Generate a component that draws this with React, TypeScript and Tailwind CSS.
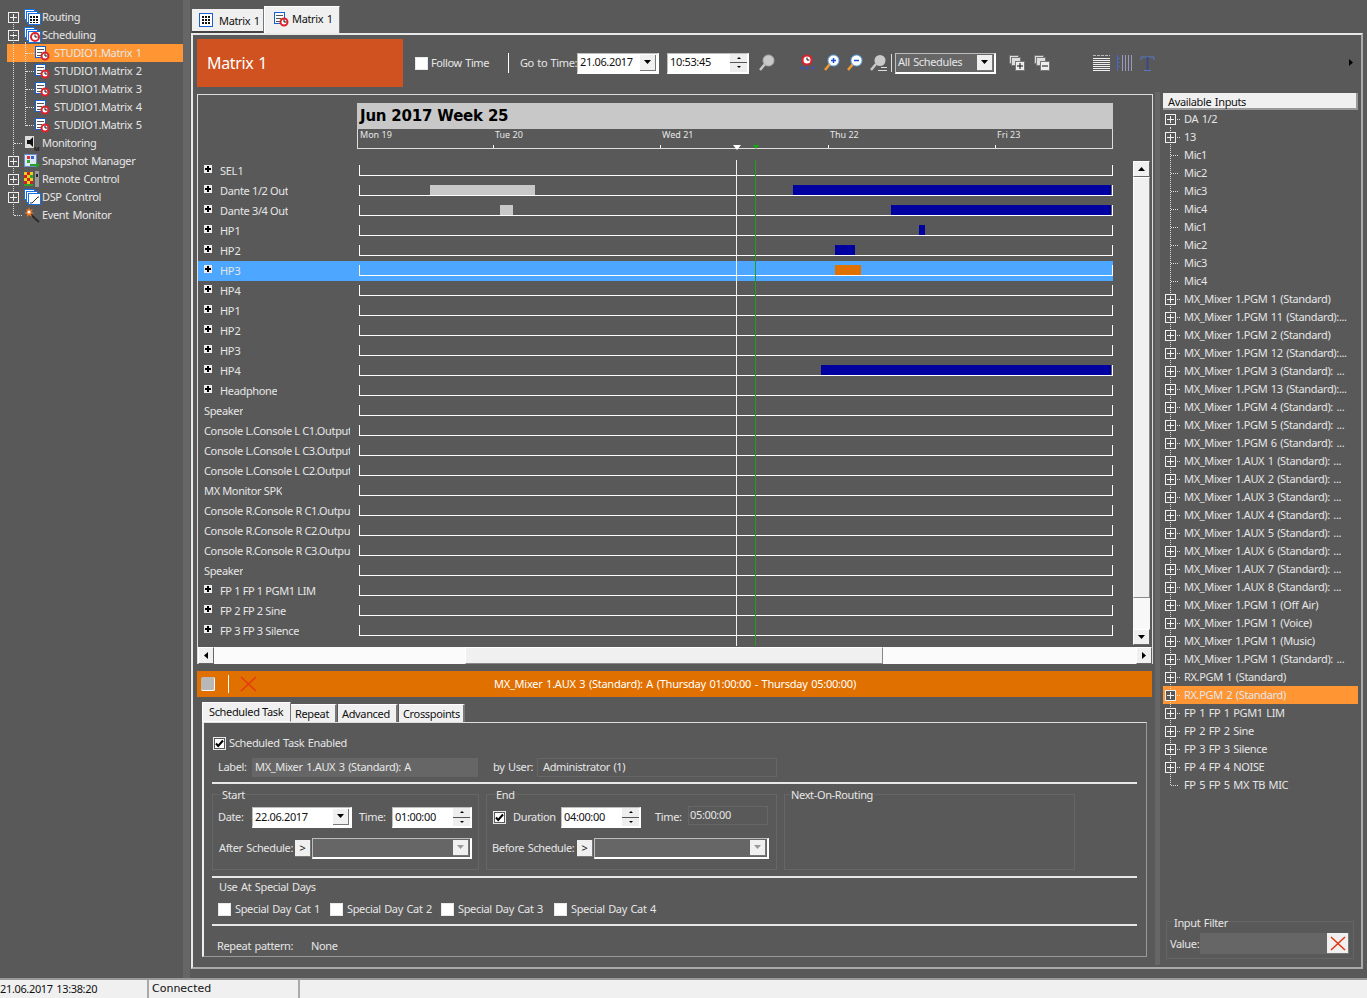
import React from "react";

const FONT = "[font-family:'Noto_Sans','Open_Sans',sans-serif]";

function Plus({ minus = false }: { minus?: boolean }) {
  return (
    <svg width="11" height="11" viewBox="0 0 11 11" className="shrink-0 relative">
      <rect x="0.5" y="0.5" width="10" height="10" fill="#595959" stroke="#f0f0f0" />
      <path d={minus ? "M2 5.5h7" : "M2 5.5h7M5.5 2v7"} stroke="#f0f0f0" fill="none" />
    </svg>
  );
}

function Clock({ x, y, r = 5 }: { x: number; y: number; r?: number }) {
  return (
    <g>
      <circle cx={x} cy={y} r={r} fill="#fff" stroke="#e0202a" strokeWidth="2" />
      <path d={`M${x} ${y - 2.5}V${y}H${x + 2.5}`} stroke="#111" fill="none" />
    </g>
  );
}

function DocClock() {
  return (
    <svg width="16" height="16" viewBox="0 0 16 16" className="shrink-0">
      <rect x="0.5" y="1.5" width="10" height="11" fill="#fff" stroke="#1a5fd0" />
      <path d="M2 4.5h7M2 7.5h5M2 10.5h4" stroke="#555" />
      <Clock x={10} y={11} r={3.5} />
    </svg>
  );
}

function Stack({ kind }: { kind: "grid" | "clock" | "curve" }) {
  return (
    <svg width="17" height="16" viewBox="0 0 17 16" className="shrink-0">
      <rect x="0.5" y="0.5" width="10" height="10" fill="#fff" stroke="#1a6fe0" />
      <rect x="2.5" y="2.5" width="11" height="11" fill="#fff" stroke="#1a6fe0" />
      <rect x="4.5" y="4.5" width="12" height="11" fill="#fff" stroke="#1a6fe0" />
      {kind === "grid" && (
        <path d="M6 7h2v2H6zM9 7h2v2H9zM12 7h2v2h-2zM6 10h2v2H6zM9 10h2v2H9zM12 10h2v2h-2zM6 13h2v1H6zM9 13h2v1H9zM12 13h2v1h-2z" fill="#111" />
      )}
      {kind === "clock" && <Clock x={11} y={10} r={4} />}
      {kind === "curve" && <path d="M6 14h2l6-6h1" stroke="#333" fill="none" />}
    </svg>
  );
}

function TreeIcon({ name }: { name: string }) {
  if (name === "monitor")
    return (
      <svg width="16" height="16" viewBox="0 0 16 16" className="shrink-0">
        <rect x="1" y="1" width="9" height="12" fill="#ddd" />
        <path d="M3 5h3l3-3v10l-3-3H3z" fill="#111" />
        <text x="10" y="16" fontSize="6" fill="#000">M</text>
      </svg>
    );
  if (name === "snapshot")
    return (
      <svg width="16" height="16" viewBox="0 0 16 16" className="shrink-0">
        <rect x="0.5" y="1.5" width="12" height="12" fill="#dfe7f5" stroke="#6a8fc8" />
        <path d="M3 3h3v3H3z" fill="#d33" />
        <path d="M7 3h3v3H7z" fill="#36c" />
        <path d="M3 7h3v3H3z" fill="#3a3" />
        <path d="M6 11h6V9l4 3-4 3v-2H6z" fill="#2aa02a" />
      </svg>
    );
  if (name === "remote")
    return (
      <svg width="16" height="16" viewBox="0 0 16 16" className="shrink-0">
        <path d="M0 1h3v3H0zM6 1h3v3H6zM3 4h3v3H3zM0 7h3v3H0zM6 7h3v3H6zM3 10h3v3H3z" fill="#e8d020" />
        <path d="M3 1h3v3H3zM0 4h3v3H0zM3 7h3v3H3zM0 10h3v3H0zM6 10h3v3H6z" fill="#d02020" />
        <path d="M6 4h3v3H6zM0 13h9v2H0z" fill="#30a030" />
        <rect x="11" y="0" width="4" height="16" fill="#999" />
        <rect x="12" y="3" width="2" height="3" fill="#222" />
      </svg>
    );
  if (name === "event")
    return (
      <svg width="16" height="16" viewBox="0 0 16 16" className="shrink-0">
        <path d="M6 7l9 8" stroke="#2a2a2a" strokeWidth="2" />
        <path d="M5 0l1 3 3-1-2 3 3 1-3 1 1 3-3-2-2 2 0-3-3-1 3-1-1-3 2 1z" fill="#f07820" />
        <circle cx="5" cy="5" r="1.5" fill="#fff" />
      </svg>
    );
  if (name === "doc") return <DocClock />;
  return <Stack kind={name as "grid" | "clock" | "curve"} />;
}

const leftTree = [
  { t: "Routing", icon: "grid", exp: "plus" },
  { t: "Scheduling", icon: "clock", exp: "minus" },
  { t: "STUDIO1.Matrix 1", icon: "doc", sub: true, sel: true },
  { t: "STUDIO1.Matrix 2", icon: "doc", sub: true },
  { t: "STUDIO1.Matrix 3", icon: "doc", sub: true },
  { t: "STUDIO1.Matrix 4", icon: "doc", sub: true },
  { t: "STUDIO1.Matrix 5", icon: "doc", sub: true },
  { t: "Monitoring", icon: "monitor" },
  { t: "Snapshot Manager", icon: "snapshot", exp: "plus" },
  { t: "Remote Control", icon: "remote", exp: "plus" },
  { t: "DSP Control", icon: "curve", exp: "plus" },
  { t: "Event Monitor", icon: "event" },
];

function LeftTree() {
  return (
    <div className="w-[183px] shrink-0 pt-2 relative">
      {leftTree.map((r) =>
        r.sub ? (
          <div key={r.t} className={`h-[18px] ml-[7px] pl-[19px] flex items-center ${r.sel ? "bg-[#ff9533]" : ""}`}>
            <span className="w-[8px] mr-[1px] border-b border-dotted border-[#ddd]" />
            <DocClock />
            <span className="ml-[3px] pb-[2px] whitespace-nowrap">{r.t}</span>
          </div>
        ) : (
          <div key={r.t} className="h-[18px] flex items-center pl-2">
            <span className="w-[15px] shrink-0 flex">
              {r.exp ? <Plus minus={r.exp === "minus"} /> : <span className="ml-[6px] w-[8px] border-b border-dotted border-[#ddd]" />}
            </span>
            <span className="ml-[1px] w-[18px] shrink-0 flex"><TreeIcon name={r.icon} /></span>
            <span className="pb-[2px] whitespace-nowrap">{r.t}</span>
          </div>
        )
      )}
      <span className="absolute left-[13px] top-[24px] h-[191px] border-l border-dotted border-[#ddd]" />
      <span className="absolute left-[25px] top-[42px] h-[84px] border-l border-dotted border-[#ddd]" />
    </div>
  );
}

function Tabs() {
  return (
    <div className="h-[33px] flex items-end pl-[1px] shrink-0">
      <div className="h-[24px] w-[72px] bg-[#f0f0f0] text-[#111] flex items-center gap-[6px] pl-[7px] border-r border-[#777] border-b-2 border-b-[#444]">
        <svg width="14" height="14" viewBox="0 0 14 14"><rect x="0.5" y="0.5" width="13" height="13" fill="#fff" stroke="#1a5fd0" /><path d="M3 3h2v2H3zM6 3h2v2H6zM9 3h2v2H9zM3 6h2v2H3zM6 6h2v2H6zM9 6h2v2H9zM3 9h2v2H3zM6 9h2v2H6zM9 9h2v2H9z" fill="#111" /></svg>
        <span>Matrix 1</span>
      </div>
      <div className="h-[27px] w-[76px] bg-[#f0f0f0] text-[#111] flex items-center gap-[2px] pl-[9px] pb-[2px] border border-white border-r-[#777] border-b-0">
        <DocClock />
        <span className="pb-[2px]">Matrix 1</span>
      </div>
    </div>
  );
}

function Check({ checked = false, size = 13 }: { checked?: boolean; size?: number }) {
  return (
    <svg width={size} height={size} viewBox="0 0 13 13" className="shrink-0">
      <rect x="0.5" y="0.5" width="12" height="12" fill={checked ? "#595959" : "#fff"} stroke="#e8e8e8" />
      <rect x="2" y="2" width="9" height="9" fill="#fff" />
      {checked && <path d="M3 6.5l2.2 2.5L10 3.5" stroke="#000" strokeWidth="2" fill="none" />}
    </svg>
  );
}

function Arrow({ dir = "down", color = "#000" }: { dir?: string; color?: string }) {
  const d = dir === "down" ? "M1 2h7L4.5 6z" : dir === "up" ? "M1 6h7L4.5 2z" : dir === "left" ? "M6 1v7L2 4.5z" : "M2 1v7l4-3.5z";
  return (
    <svg width="9" height="9" viewBox="0 0 9 9"><path d={d} fill={color} /></svg>
  );
}

function Combo({ w, value, dark = false, disabled = false }: { w: string; value?: string; dark?: boolean; disabled?: boolean }) {
  return (
    <div className={`${w} h-[21px] flex items-center border border-[#bdbdbd] border-r-white border-b-white border-b-2 border-r-2 ${dark ? "bg-[#666]" : "bg-white text-[#111]"}`}>
      <span className="flex-1 pl-[2px] pb-[2px] whitespace-nowrap overflow-hidden">{value}</span>
      <span className="w-[16px] h-[16px] mr-[1px] bg-[#f0f0f0] border-r border-b border-[#777] flex items-center justify-center">
        <Arrow color={disabled ? "#999" : "#000"} />
      </span>
    </div>
  );
}

function Spin({ w, value }: { w: string; value: string }) {
  return (
    <div className={`${w} h-[21px] flex items-center bg-white text-[#111] border border-[#bdbdbd] border-r-2 border-b-2 border-r-white border-b-white`}>
      <span className="flex-1 pl-[2px] pb-[2px]">{value}</span>
      <span className="w-[17px] h-full flex flex-col gap-[1px] bg-[#555]">
        <span className="flex-1 bg-[#eee] flex items-center justify-center"><span className="w-0 h-0 border-x-[2px] border-x-transparent border-b-[2px] border-b-black" /></span>
        <span className="flex-1 bg-[#eee] flex items-center justify-center"><span className="w-0 h-0 border-x-[2px] border-x-transparent border-t-[2px] border-t-black" /></span>
      </span>
    </div>
  );
}

function Mag({ sign }: { sign?: "+" | "-" }) {
  const c = sign ? "#9ecdf5" : "#c9c9c9";
  return (
    <svg width="17" height="18" viewBox="0 0 17 18">
      <path d="M7 10l-5 6" stroke={sign ? "#f09a30" : "#c9c9c9"} strokeWidth="2.5" />
      <circle cx="10.5" cy="6.5" r="5.5" fill={sign ? "#fff" : c} stroke={sign ? "#5ea8e8" : "#aaa"} />
      {sign && <path d={sign === "+" ? "M8 6.5h5M10.5 4v5" : "M8 6.5h5"} stroke="#1a4fd0" strokeWidth="1.5" />}
    </svg>
  );
}

function Layers({ sign }: { sign: "+" | "-" }) {
  return (
    <svg width="16" height="16" viewBox="0 0 16 16">
      <rect x="0.5" y="0.5" width="9" height="8" fill="#ddd" stroke="#777" />
      <rect x="2.5" y="2.5" width="9" height="8" fill="#ddd" stroke="#777" />
      <rect x="6.5" y="6.5" width="9" height="9" fill="#eee" stroke="#777" />
      <path d={sign === "+" ? "M8 11h6M11 8v6" : "M8 11h6"} stroke="#111" />
    </svg>
  );
}

function Toolbar() {
  return (
    <div className="flex items-stretch h-[48px] shrink-0 relative">
      <div className="w-[206px] shrink-0 bg-[#d05220] text-white text-[16px] flex items-center pl-[10px]">Matrix 1</div>
      <div className="flex items-center ml-[12px] whitespace-nowrap">
        <Check />
        <span className="ml-[3px] w-[77px] pb-[2px] tracking-[-0.4px]">Follow Time</span>
        <span className="w-px h-[20px] bg-white" />
        <span className="ml-[11px] w-[57px] pb-[2px] tracking-[-0.4px]">Go to Time:</span>
        <span><Combo w="w-[82px]" value="21.06.2017" /></span>
        <span className="ml-[8px]"><Spin w="w-[82px]" value="10:53:45" /></span>
        <span className="ml-[9px] flex"><Mag /></span>
        <span className="ml-[24px] flex">
          <svg width="17" height="18" viewBox="0 0 17 18">
            <Clock x={8} y={6} r={4.5} />
            <path d="M1 14l3-2 0 4zM7 12l3 2-3 2zM13 12l3 2-3 2z" fill="#4050c0" />
          </svg>
        </span>
        <span className="ml-[7px] flex"><Mag sign="+" /></span>
        <span className="ml-[6px] flex"><Mag sign="-" /></span>
        <span className="ml-[7px] flex">
          <svg width="18" height="18" viewBox="0 0 18 18"><path d="M6 10l-5 6" stroke="#c9c9c9" strokeWidth="2.5" /><circle cx="10" cy="6.5" r="5.5" fill="#c9c9c9" /><path d="M8 16.5h9M11 13.5h6" stroke="#ddd" /></svg>
        </span>
        <span className="ml-[3px] w-px h-[18px] bg-[#ddd]" />
        <span className="ml-[3px]"><Combo w="w-[101px]" value="All Schedules" dark /></span>
        <span className="ml-[13px] flex"><Layers sign="+" /></span>
        <span className="ml-[9px] flex"><Layers sign="-" /></span>
        <span className="ml-[43px] flex">
          <svg width="17" height="17" viewBox="0 0 17 17"><path d="M0 0.5h17" stroke="#bbb" strokeDasharray="3 1" /><path d="M0 3.5h17M0 5.5h17M0 7.5h17M0 9.5h17M0 11.5h17M0 13.5h17M0 15.5h17" stroke="#f0f0f0" /></svg>
        </span>
        <span className="ml-[7px] flex">
          <svg width="16" height="16" viewBox="0 0 16 16"><path d="M0.5 0v16M0 3.5h3M0 7.5h3M0 11.5h3" stroke="#4a68c8" /><path d="M5.5 0v16M8.5 0v16M11.5 0v16M14.5 0v16" stroke="#9a9ac0" /></svg>
        </span>
        <span className="ml-[7px] flex">
          <svg width="15" height="15" viewBox="0 0 15 15"><path d="M1 4V1h13v3" stroke="#5b78c8" fill="none" /><path d="M7.5 1v13" stroke="#3a4a80" strokeWidth="2" fill="none" /><path d="M4 14.5h7" stroke="#5b78c8" /></svg>
        </span>
      </div>
      <span className="absolute right-[5px] top-[19px] flex"><Arrow dir="right" /></span>
    </div>
  );
}

const rows: { t: string; exp?: boolean; sel?: boolean; bars?: [number, number, string][] }[] = [
  { t: "SEL 1", exp: true },
  { t: "Dante 1/2 Out", exp: true, bars: [[430, 535, "#c8c8c8"], [793, 1111, "#0000a0"]] },
  { t: "Dante 3/4 Out", exp: true, bars: [[500, 513, "#c8c8c8"], [891, 1111, "#0000a0"]] },
  { t: "HP 1", exp: true, bars: [[919, 925, "#0000a0"]] },
  { t: "HP 2", exp: true, bars: [[835, 855, "#0000a0"]] },
  { t: "HP 3", exp: true, sel: true, bars: [[835, 861, "#e07000"]] },
  { t: "HP 4", exp: true },
  { t: "HP 1", exp: true },
  { t: "HP 2", exp: true },
  { t: "HP 3", exp: true },
  { t: "HP 4", exp: true, bars: [[821, 1111, "#0000a0"]] },
  { t: "Headphone", exp: true },
  { t: "Speaker" },
  { t: "Console L.Console L C1.Output" },
  { t: "Console L.Console L C3.Output" },
  { t: "Console L.Console L C2.Output" },
  { t: "MX Monitor SPK" },
  { t: "Console R.Console R C1.Output" },
  { t: "Console R.Console R C2.Output" },
  { t: "Console R.Console R C3.Output" },
  { t: "Speaker" },
  { t: "FP 1 FP 1 PGM1 LIM", exp: true },
  { t: "FP 2 FP 2 Sine", exp: true },
  { t: "FP 3 FP 3 Silence", exp: true },
];

function GanttRow({ r }: { r: (typeof rows)[number] }) {
  return (
    <div className={`h-5 w-[915px] flex ${r.sel ? "bg-[#4da6ff]" : ""}`}>
      <div className="w-[161px] shrink-0 flex items-center overflow-hidden whitespace-nowrap pl-[6px] pr-[9px] [word-spacing:0px]">
        {r.exp && (
          <span className="w-[8px] h-[8px] mr-[8px] mb-[4px] shrink-0 bg-[#eee] flex items-center justify-center relative">
            <span className="absolute w-[6px] h-[2px] bg-black" />
            <span className="absolute w-[2px] h-[6px] bg-black" />
          </span>
        )}
        <span className={`overflow-hidden pb-[2px] ${r.t.length <= 5 ? "[word-spacing:-2px]" : ""}`}>{r.t}</span>
      </div>
      <div className="relative w-[754px] h-[11px] mt-[4px] border-l border-b border-r border-white">
        {r.bars?.map((b, i) => (
          <span key={i} className="absolute top-0 h-[10px]" style={{ left: b[0] - 360, width: b[1] - b[0], backgroundColor: b[2] }} />
        ))}
      </div>
    </div>
  );
}

function Gantt() {
  return (
    <div className="relative mt-[7px] w-[956px] h-[570px] border border-[#ddd] border-b-0 flex flex-col shrink-0">
      <div className="pl-[159px] pt-[8px] h-[57px] shrink-0">
        <div className="w-[756px] h-[26px] bg-[#c8c8c8] text-[#000] text-[15px] tracking-[-0.2px] [word-spacing:0px] font-bold pl-[3px] leading-[26px] [font-family:'DejaVu_Sans',sans-serif]">Jun 2017 Week 25</div>
        <div className="relative w-[756px] h-[20px] border-l border-r border-b border-[#ddd] text-[9px] tracking-normal [word-spacing:0px]">
          {[["Mon 19", 0], ["Tue 20", 135], ["Wed 21", 302], ["Thu 22", 470], ["Fri 23", 637]].map(([t, x]) => (
            <span key={t} className="absolute top-0 leading-[12px] pl-[2px]" style={{ left: Number(x) }}>{t}</span>
          ))}
          {[135, 302, 470, 637].map((x) => (
            <span key={x} className="absolute bottom-0 w-px h-[3px] bg-white" style={{ left: x }} />
          ))}
        </div>
      </div>
      <div className="flex flex-1 min-h-0 pt-[9px]">
        <div className="flex-1">
          {rows.map((r, i) => <GanttRow key={i} r={r} />)}
        </div>
        <div className="w-[17px] h-[484px] mr-[2px] shrink-0 bg-[#f8f8f8] flex flex-col">
          <span className="h-[16px] bg-[#f0f0f0] border border-white border-r-[#666] border-b-[#666] flex items-center justify-center"><Arrow dir="up" /></span>
          <span className="flex-1 bg-[#f0f0f0] border border-white border-r-[#888] border-b-[#888] mb-[31px]" />
          <span className="h-[16px] bg-[#f0f0f0] border border-white border-r-[#666] border-b-[#666] flex items-center justify-center"><Arrow dir="down" /></span>
        </div>
      </div>
      <span className="absolute left-[538px] top-[65px] bottom-[18px] w-px bg-[#f0f0f0]" />
      <span className="absolute left-[557px] top-[65px] bottom-[18px] w-px bg-[#1f9f1f]" />
      <span className="absolute left-[535px] top-[50px] w-0 h-0 border-x-[4px] border-x-transparent border-t-[5px] border-t-white" />
      <span className="absolute left-[555px] top-[50px] w-0 h-0 border-x-[3px] border-x-transparent border-t-[4px] border-t-[#10b010]" />
      <div className="absolute left-0 right-0 bottom-0 h-[17px] flex bg-[#fbfbfb]">
        <span className="w-[16px] bg-[#f0f0f0] border border-white border-r-[#666] border-b-[#666] flex items-center justify-center"><Arrow dir="left" /></span>
        <span className="w-[251px]" />
        <span className="w-[418px] bg-[#f0f0f0] border border-white border-r-[#888] border-b-[#888]" />
        <span className="flex-1" />
        <span className="w-[16px] bg-[#f0f0f0] border border-white border-r-[#666] border-b-[#666] flex items-center justify-center"><Arrow dir="right" /></span>
      </div>
    </div>
  );
}

function Group({ title, w, h, titleLeft = "left-[8px]", children }: { title: string; w: string; h: string; titleLeft?: string; children?: React.ReactNode }) {
  return (
    <div className={`${w} ${h} relative border border-[#666] shrink-0`}>
      <span className={`absolute ${titleLeft} -top-[7px] px-[1px] bg-[#595959] leading-[13px]`}>{title}</span>
      {children}
    </div>
  );
}

function Detail() {
  return (
    <div className="w-[956px] shrink-0 flex flex-col">
      <div className="mt-[7px] h-[26px] w-[955px] bg-[#e07000] flex items-center relative">
        <span className="ml-[4px] w-[14px] h-[14px] rounded-[2px] bg-[#b8b8b8] border-r border-b border-white" />
        <span className="ml-[13px] w-px h-[18px] bg-white" />
        <svg className="ml-[11px]" width="17" height="16" viewBox="0 0 17 16"><path d="M1 1l15 14M16 1L1 15" stroke="#e83a10" strokeWidth="1.6" /></svg>
        <span className="absolute left-0 right-0 text-center text-white pl-[1px] pb-[2px] tracking-[-0.25px]">MX_Mixer 1.AUX 3 (Standard): A (Thursday 01:00:00 - Thursday 05:00:00)</span>
      </div>
      <div className="ml-[5px] mt-[5px] h-[20px] flex items-end text-[#111] [word-spacing:0px]">
        <span className="h-[20px] w-[89px] bg-[#f0f0f0] border border-white border-r-[#777] pl-[6px] leading-[17px]">Scheduled Task</span>
        <span className="h-[18px] w-[46px] bg-[#f0f0f0] border-r-2 border-[#777] border-t border-t-white pl-[4px] leading-[17px]">Repeat</span>
        <span className="h-[18px] w-[60px] ml-px bg-[#f0f0f0] border-r-2 border-[#777] border-t border-t-white pl-[4px] leading-[17px]">Advanced</span>
        <span className="h-[18px] w-[66px] ml-px bg-[#f0f0f0] border-r-2 border-[#777] border-t border-t-white pl-[4px] leading-[17px]">Crosspoints</span>
      </div>
      <div className="ml-[5px] h-[235px] w-[945px] border border-[#ddd] border-r-[#999] border-b-[#999] border-l-2 border-l-[#eee] flex flex-col shrink-0 pl-[8px]">
        <div className="mt-[13px] h-[15px] flex items-center ml-[1px]">
          <Check checked />
          <span className="ml-[3px] pb-[2px]">Scheduled Task Enabled</span>
        </div>
        <div className="mt-[7px] h-[19px] flex items-center ml-[6px]">
          <span className="w-[34px] pb-[2px]">Label:</span>
          <span className="w-[226px] h-[19px] bg-[#666] leading-[17px] pl-[3px]">MX_Mixer 1.AUX 3 (Standard): A</span>
          <span className="ml-[15px] w-[44px] pb-[2px] whitespace-nowrap">by User:</span>
          <span className="w-[240px] h-[19px] border border-[#666] leading-[15px] pl-[5px]">Administrator (1)</span>
        </div>
        <div className="mt-[5px] h-[2px] w-[925px] bg-[#e8e8e8]" />
        <div className="mt-[10px] flex gap-[7px]">
          <Group title="Start" w="w-[267px]" h="h-[76px]">
            <div className="flex items-center mt-[12px] ml-[5px]">
              <span className="w-[34px] pb-[2px]">Date:</span>
              <Combo w="w-[100px]" value="22.06.2017" />
              <span className="ml-[7px] w-[33px] pb-[2px]">Time:</span>
              <Spin w="w-[80px]" value="01:00:00" />
            </div>
            <div className="flex items-center mt-[10px] ml-[6px]">
              <span className="w-[76px] pb-[2px] whitespace-nowrap">After Schedule:</span>
              <span className="w-[16px] h-[17px] bg-[#f0f0f0] text-[#111] border-r border-b border-[#777] leading-[15px] text-center">&gt;</span>
              <span className="ml-px"><Combo w="w-[160px]" dark disabled /></span>
            </div>
          </Group>
          <Group title="End" w="w-[291px]" h="h-[76px]">
            <div className="flex items-center mt-[12px] ml-[6px]">
              <Check checked />
              <span className="ml-[7px] w-[48px] pb-[2px]">Duration</span>
              <Spin w="w-[80px]" value="04:00:00" />
              <span className="ml-[14px] w-[33px] pb-[2px]">Time:</span>
              <span className="w-[80px] h-[19px] border border-[#666] -mt-[4px] leading-[15px] pl-[1px]">05:00:00</span>
            </div>
            <div className="flex items-center mt-[10px] ml-[5px]">
              <span className="w-[85px] pb-[2px] whitespace-nowrap">Before Schedule:</span>
              <span className="w-[16px] h-[17px] bg-[#f0f0f0] text-[#111] border-r border-b border-[#777] leading-[15px] text-center">&gt;</span>
              <span className="ml-px"><Combo w="w-[175px]" dark disabled /></span>
            </div>
          </Group>
          <Group title="Next-On-Routing" w="w-[291px]" h="h-[76px]" titleLeft="left-[5px]" />
        </div>
        <div className="mt-[6px] h-[2px] w-[925px] bg-[#e8e8e8]" />
        <div className="ml-[7px] mt-[1px] leading-[15px]">Use At Special Days</div>
        <div className="ml-[6px] mt-[8px] h-[15px] flex items-center">
          {["Special Day Cat 1", "Special Day Cat 2", "Special Day Cat 3", "Special Day Cat 4"].map((t, i) => (
            <span key={t} className={`flex items-center ${i === 0 ? "w-[112px]" : i === 1 ? "w-[111px]" : i === 2 ? "w-[113px]" : ""}`}>
              <Check />
              <span className="ml-[4px] pb-[2px]">{t}</span>
            </span>
          ))}
        </div>
        <div className="mt-[7px] h-[2px] w-[925px] bg-[#e8e8e8]" />
        <div className="ml-[5px] mt-[12px] flex leading-[15px]">
          <span className="w-[94px]">Repeat pattern:</span>
          <span>None</span>
        </div>
      </div>
    </div>
  );
}

const inputs: { t: string; exp?: boolean; sel?: boolean }[] = [
  { t: "DA 1/2", exp: true },
  { t: "13", exp: true },
  { t: "Mic1" }, { t: "Mic2" }, { t: "Mic3" }, { t: "Mic4" },
  { t: "Mic1" }, { t: "Mic2" }, { t: "Mic3" }, { t: "Mic4" },
  ...[
    "MX_Mixer 1.PGM 1 (Standard)",
    "MX_Mixer 1.PGM 11 (Standard):...",
    "MX_Mixer 1.PGM 2 (Standard)",
    "MX_Mixer 1.PGM 12 (Standard):...",
    "MX_Mixer 1.PGM 3 (Standard): ...",
    "MX_Mixer 1.PGM 13 (Standard):...",
    "MX_Mixer 1.PGM 4 (Standard): ...",
    "MX_Mixer 1.PGM 5 (Standard): ...",
    "MX_Mixer 1.PGM 6 (Standard): ...",
    "MX_Mixer 1.AUX 1 (Standard): ...",
    "MX_Mixer 1.AUX 2 (Standard): ...",
    "MX_Mixer 1.AUX 3 (Standard): ...",
    "MX_Mixer 1.AUX 4 (Standard): ...",
    "MX_Mixer 1.AUX 5 (Standard): ...",
    "MX_Mixer 1.AUX 6 (Standard): ...",
    "MX_Mixer 1.AUX 7 (Standard): ...",
    "MX_Mixer 1.AUX 8 (Standard): ...",
    "MX_Mixer 1.PGM 1 (Off Air)",
    "MX_Mixer 1.PGM 1 (Voice)",
    "MX_Mixer 1.PGM 1 (Music)",
    "MX_Mixer 1.PGM 1 (Standard): ...",
    "RX.PGM 1 (Standard)",
  ].map((t) => ({ t, exp: true })),
  { t: "RX.PGM 2 (Standard)", exp: true, sel: true },
  { t: "FP 1 FP 1 PGM1 LIM", exp: true },
  { t: "FP 2 FP 2 Sine", exp: true },
  { t: "FP 3 FP 3 Silence", exp: true },
  { t: "FP 4 FP 4 NOISE", exp: true },
  { t: "FP 5 FP 5 MX TB MIC" },
];

function RightPanel() {
  return (
    <div className="w-[195px] ml-[3px] shrink-0 flex flex-col pt-[6px] h-full relative">
      <span className="absolute left-[7px] top-[40px] h-[658px] border-l border-dotted border-[#ddd]" />
      <div className="h-[17px] bg-[#f0f0f0] border-b-2 border-r-2 border-[#999] text-[#111] pl-[5px] leading-[17px] shrink-0">Available Inputs</div>
      {inputs.map((r, i) => (
        <div key={i} className={`h-[18px] flex items-center shrink-0 whitespace-nowrap ${r.sel ? "bg-[#ff9533]" : ""}`}>
          <span className="w-[21px] pl-[2px] flex items-center shrink-0">
            {r.exp ? (
              <>
                <Plus />
                <span className="ml-[1px] w-[3px] border-b border-dotted border-[#ddd]" />
              </>
            ) : (
              <span className="ml-[6px] w-[7px] border-b border-dotted border-[#ddd]" />
            )}
          </span>
          <span className="pb-[2px]">{r.t}</span>
        </div>
      ))}
      <div className="flex-1" />
      <div className="h-[38px] w-[188px] ml-[3px] mb-[8px] border border-[#666] relative shrink-0">
        <span className="absolute left-[6px] -top-[6px] bg-[#595959] px-[1px] leading-[13px]">Input Filter</span>
        <div className="flex items-center mt-[11px] ml-[3px]">
          <span className="w-[30px] pb-px">Value:</span>
          <span className="h-[21px] w-[127px] bg-[#666]" />
          <span className="w-[22px] h-[21px] bg-[#f0f0f0] border-r border-b border-[#777] flex items-center justify-center">
            <svg width="16" height="15" viewBox="0 0 16 15"><path d="M1 1l14 13M15 1L1 14" stroke="#e03a10" strokeWidth="1.6" /></svg>
          </span>
        </div>
      </div>
    </div>
  );
}

export default function App() {
  return (
    <div className={`w-[1367px] h-[998px] overflow-hidden bg-[#595959] text-[#e6e6e6] text-[11px] leading-[13px] tracking-[-0.35px] [word-spacing:1px] flex flex-col ${FONT}`}>
      <div className="flex flex-1 min-h-0">
        <LeftTree />
        <div className="w-[7px] shrink-0 bg-[#666]" />
        <div className="w-[1px] shrink-0" />
        <div className="flex-1 flex flex-col min-w-0 pr-[4px]">
          <Tabs />
          <div className="h-[936px] w-[1172px] border-t-2 border-l-2 border-[#e8e8e8] border-r-2 border-r-[#aaa] border-b-2 border-b-[#aaa] flex flex-col shrink-0 pl-[4px] pt-[4px]">
            <Toolbar />
            <div className="flex flex-1 min-h-0">
              <div className="flex flex-col shrink-0 w-[956px]">
                <Gantt />
                <Detail />
              </div>
              <div className="w-[5px] ml-[2px] shrink-0 bg-[#666] mt-[5px] mb-[2px]" />
              <RightPanel />
            </div>
          </div>
        </div>
      </div>
      <div className="h-[20px] shrink-0 bg-[#f0f0f0] border-t-2 border-[#999] text-[#111] flex items-center">
        <span className="w-[149px] h-full border-r-2 border-[#aaa] whitespace-nowrap leading-[17px]">21.06.2017 13:38:20</span>
        <span className="w-[151px] h-full border-r-2 border-[#aaa] pl-[3px] leading-[17px] tracking-normal [font-family:'DejaVu_Sans',sans-serif]">Connected</span>
      </div>
    </div>
  );
}
